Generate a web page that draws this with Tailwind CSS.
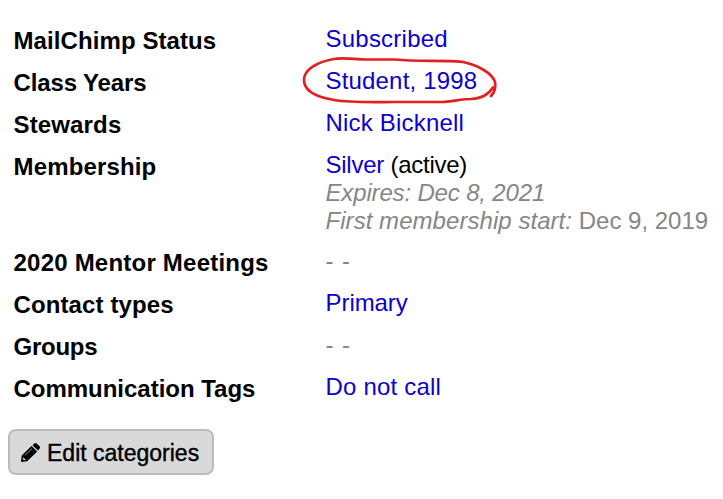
<!DOCTYPE html>
<html lang="en">
<head>
<meta charset="utf-8">
<title>Contact categories</title>
<script src="https://cdn.jsdelivr.net/npm/@tailwindcss/browser@4"></script>
</head>
<body class="h-[499px] w-[723px] overflow-hidden bg-white font-['Liberation_Sans',Arial,sans-serif] text-[24px] leading-[28px] text-black">
<dl class="grid grid-cols-[312px_1fr] grid-rows-[42px_42px_42px_96px_42px_42px_42px_42px] pl-[13.5px] pt-[25px] whitespace-nowrap [&>dt]:pt-[2px] [&>dt]:font-bold">
  <dt class="tracking-[0.09px]">MailChimp Status</dt>
  <dd class="tracking-[0.23px]"><a class="text-[#0c00cd]">Subscribed</a></dd>
  <dt class="tracking-[-0.13px]">Class Years</dt>
  <dd class="relative tracking-[0.18px]"><a class="text-[#0c00cd]">Student, 1998</a>
    <svg class="absolute -left-[25.5px] -top-[12px]" width="200" height="52" viewBox="300 55 200 52" fill="none" stroke="#e3201f" stroke-width="2.7" stroke-linecap="round" stroke-linejoin="round"><path d="M462 61.8C478 65 492 73 495 82C496 88 494 93 491 96M493 87.500C488 95 482 98 471 99C462 99 455 101 444 101.8L396 102C373 102 352 103 334 100C316 97 304 91 304 80C304 70 316 62 334 59C342 57.500 352 59 366 59.500L395 59.500C418 62 440 60 462 61.800"/></svg>
  </dd>
  <dt class="tracking-[0.15px]">Stewards</dt>
  <dd class="tracking-[0.19px]"><a class="text-[#0c00cd]">Nick Bicknell</a></dd>
  <dt class="tracking-[0.15px]">Membership</dt>
  <dd class="tracking-[-0.25px]"><a class="text-[#0c00cd]">Silver</a> (active)
    <div class="text-[#868686] italic tracking-[-0.16px]">Expires: Dec 8, 2021</div>
    <div class="text-[#868686] tracking-normal"><i class="tracking-[0.05px]">First membership start:</i> Dec 9, 2019</div>
  </dd>
  <dt class="tracking-[0.22px]">2020 Mentor Meetings</dt>
  <dd class="text-[#868686] tracking-[0.9px]">- -</dd>
  <dt class="tracking-[0.12px]">Contact types</dt>
  <dd class="tracking-[-0.06px]"><a class="text-[#0c00cd]">Primary</a></dd>
  <dt class="tracking-[-0.25px]">Groups</dt>
  <dd class="text-[#868686] tracking-[0.9px]">- -</dd>
  <dt class="tracking-[-0.02px]">Communication Tags</dt>
  <dd class="tracking-[0.19px]"><a class="text-[#0c00cd]">Do not call</a></dd>
</dl>
<button class="ml-[8px] mt-[14px] flex h-[46px] w-[206px] items-center rounded-[8px] border-2 border-[#bcbcbc] bg-[#d9d9d9] pl-[11px] text-[23px] whitespace-nowrap [-webkit-text-stroke:0.4px_black]">
  <svg class="mr-[7px] shrink-0" width="19" height="19" viewBox="0 0 19 19"><path d="M0 19L.7 12.500L10.500 3L16.200 8.500L6.200 18.200ZM11.500 2.200L13.300.6Q14.500-.4 15.700.6L18.500 3.300Q19.500 4.500 18.500 5.700L17.100 7.500Z"/><path d="M2.100 14.200L4.800 16.800L3 17.200L1.800 16Z" fill="#d9d9d9"/><path d="M4 12.300L11 5.500" fill="none" stroke="#d9d9d9" stroke-width=".7"/></svg>
  <span class="relative top-px">Edit categories</span>
</button>
</body>
</html>
